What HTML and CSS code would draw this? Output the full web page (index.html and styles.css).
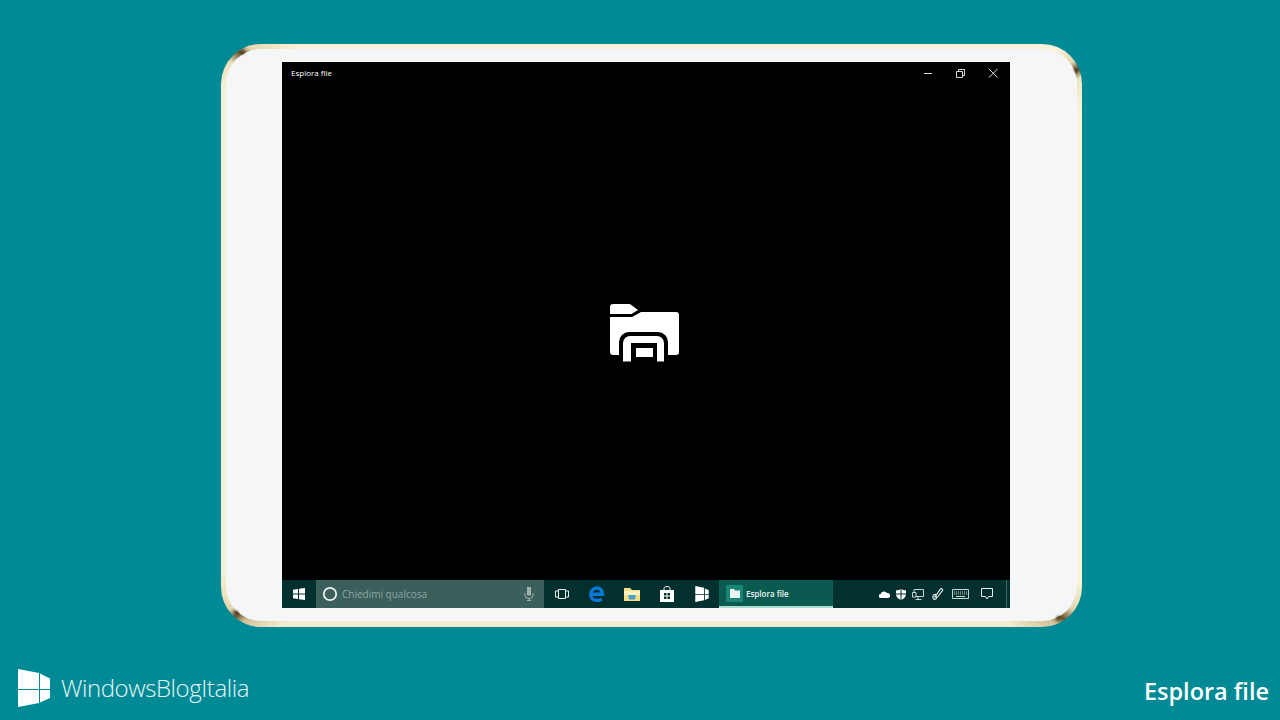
FILE: index.html
```html
<!DOCTYPE html>
<html lang="it">
<head>
<meta charset="utf-8">
<title>Esplora file</title>
<link rel="stylesheet" href="styles.css">
</head>
<body>
<main class="stage">
  <div class="tablet">
    <span class="spot spot-tl"></span><span class="spot spot-tr"></span><span class="spot spot-bl"></span><span class="spot spot-br"></span>
    <div class="face">
      <div class="screen">
        <header class="titlebar">
          <span class="title">Esplora file</span>
          <div class="controls">
            <svg class="ctl" viewBox="0 0 33 12"><path d="M13 6.500h8" stroke="#ddd" fill="none"/></svg>
            <svg class="ctl" viewBox="0 0 33 12"><path d="M12.500 4.500h6v6h-6zM14.500 4.500v-2h6v6h-2" stroke="#ddd" fill="none"/></svg>
            <svg class="ctl" viewBox="0 0 33 12"><path d="M12 2l8.500 8.500M20.500 2L12 10.500" stroke="#ddd" fill="none"/></svg>
          </div>
        </header>
        <div class="splash">
          <svg class="folder" viewBox="0 0 90 75">
            <path fill="#fff" d="M10 12a3 3 0 0 1 3-3h16a3 3 0 0 1 2 .8l7 5.200-6.500 4H10z"/>
            <path fill="#fff" d="M10 22h22l9-5h35a3 3 0 0 1 3 3v37a3 3 0 0 1-3 3H13a3 3 0 0 1-3-3z"/>
            <path fill="#000" d="M19 67V47a10 10 0 0 1 10-10h29a10 10 0 0 1 10 10v20z"/>
            <path fill="#fff" d="M23 66.500V48a7 7 0 0 1 7-7h27a7 7 0 0 1 7 7v18.500H57V48H31v18.500z"/>
            <path fill="#fff" d="M36 53h17v9H36z"/>
          </svg>
        </div>
        <nav class="taskbar">
          <div class="start">
            <svg class="i12" viewBox="0 0 12 12"><path fill="#fff" d="M0 1.700l5-.7v4.500H0zM6 .8l6-.8v5.500H6zM0 6.500h5V11l-5-.7zM6 6.500h6V12l-6-.8z"/></svg>
          </div>
          <div class="search">
            <svg class="cortana" viewBox="0 0 16 16"><circle cx="8" cy="8" r="6.200" fill="none" stroke="#e8efee" stroke-width="1.800"/></svg>
            <span class="query">Chiedimi qualcosa</span>
            <svg class="mic" viewBox="0 0 10 14"><path fill="#9fb2ae" d="M3 0h4v8.500H3z"/><path d="M1 6v2.500a4 3 0 0 0 8 0V6M5 11.500V14M3 13.500h4" fill="none" stroke="#9fb2ae"/></svg>
          </div>
          <div class="pins">
            <span class="pin"><svg class="i14" viewBox="0 0 14 12"><path fill="none" stroke="#e6eeec" d="M3.500 1.500h7v9h-7zM3.500 3H.5v6h3M10.500 3h3v6h-3"/></svg></span>
            <span class="pin"><svg class="i16" viewBox="0 0 16 16"><path fill="none" stroke="#0a78d7" stroke-width="3.400" d="M2 8.300h11.500C13.500 4.500 11 2 7.800 2 4.300 2 1.800 5 1.800 8.500c0 3.600 2.700 6 6 6 2 0 3.700-.5 5-1.500"/></svg></span>
            <span class="pin"><svg class="i16" viewBox="0 0 16 14"><path fill="#f6dd84" d="M0 1h6l2 2h8v11H0z"/><path fill="#fcf0bd" d="M0 4h16v4H0z"/><path fill="#4a9ccf" d="M4 8h8l-1 4.500H5z"/></svg></span>
            <span class="pin"><svg class="i16" viewBox="0 0 16 16"><path fill="none" stroke="#fff" d="M5 4.500V2.500C5 1.300 6.300.5 8 .5s3 .8 3 2v2"/><path fill="#fff" fill-rule="evenodd" d="M1 4h14v12H1zM5 7v2.500h2.500V7zM8.500 7v2.500H11V7zM5 10.500V13h2.500v-2.500zM8.500 10.500V13H11v-2.500z"/></svg></span>
            <span class="pin"><svg class="i16" viewBox="0 0 32 38"><path fill="#fff" d="M0 0l21 4v15H0zM23 6l9 4v9h-9zM0 21h21v13L0 38zM23 21h9v8l-9 4z"/></svg></span>
          </div>
          <div class="active">
            <span class="tile"><svg class="i10" viewBox="0 0 10 9"><path fill="#e8f4f1" d="M0 0h4l1 1.500h5V9H0z"/></svg></span>
            <span class="active-label">Esplora file</span>
          </div>
          <div class="tray">
            <svg class="t-cloud" viewBox="0 0 11 8"><path fill="#fff" d="M2 8a2 2 0 0 1-.3-4A3.500 3.500 0 0 1 8 3a2.500 2.500 0 0 1 1 5z"/></svg>
            <svg class="t-shield" viewBox="0 0 10 11"><path fill="#fff" d="M5 0c1.500 1 3 1.300 5 1.300V5c0 3-2 5-5 6-3-1-5-3-5-6V1.300C2 1.300 3.500 1 5 0z"/><path stroke="#02302f" d="M5 0v11M0 5h10"/></svg>
            <svg class="t-net" viewBox="0 0 12 11"><path fill="none" stroke="#dfe9e7" stroke-width=".9" d="M2 3V.5h9.500v7H4M.5 3.500h3.500v4.500H.5zM6 8v2.500M3.500 10.500h6"/></svg>
            <svg class="t-pen" viewBox="0 0 12 12"><path fill="none" stroke="#dfe9e7" stroke-width="1.200" d="M4 6.500C2 6 .5 8 1 10s3 1.500 3.500 0S3.500 8 2.500 9.500L8.500 1c1-.8 2.500.3 2 1.500L6 8.500c-.8 1-2 .5-1.500-.5"/></svg>
            <svg class="t-key" viewBox="0 0 17 10"><path fill="none" stroke="#c9d8d5" d="M.5.500h16v9H.5z"/><path stroke="#c9d8d5" stroke-dasharray="1 1" d="M2 3h13M2 5h13"/><path stroke="#c9d8d5" d="M4 7.500h9"/></svg>
            <svg class="t-note" viewBox="0 0 12 12"><path fill="none" stroke="#e6eeec" d="M.5.500h11v8H7.500L6 11 4.500 8.500H.5z"/></svg>
            <span class="edge"></span>
          </div>
        </nav>
      </div>
    </div>
  </div>
</main>
<footer class="footer">
  <div class="brand">
    <svg class="logo" viewBox="0 0 32 38"><path fill="#fff" d="M0 0l21 4v16H0zM22 4.500l10 5V20H22zM0 21h21v13L0 38zM22 21h10v8l-10 4.500z"/></svg>
    <span class="brand-name">WindowsBlogItalia</span>
  </div>
  <span class="page-title">Esplora file</span>
</footer>
</body>
</html>
```
FILE: styles.css
```css
* { box-sizing: border-box; }
html, body { margin: 0; height: 720px; overflow: hidden; }
body {
  background: #008a96;
  font-family: "Open Sans", "Noto Sans", sans-serif;
  color: #fff;
}
svg { display: block; }

.stage { padding: 44px 198px 0 221px; height: 662px; }

.tablet {
  position: relative;
  width: 861px;
  height: 583px;
  padding: 5px 5px 6px;
  border-radius: 40px;
  background: conic-gradient(
    from 0deg,
    #f9f2d6 0deg,
    #f9f2d6 55deg,
    #e4d6ae 57deg,
    #6a5330 58deg,
    #f0e6c4 59deg,
    #f9f2d6 62deg,
    #f9f2d6 120deg,
    #e4d6ae 123deg,
    #6a5330 124.500deg,
    #d2c198 125.500deg,
    #f4ecce 129deg,
    #f4ecce 232deg,
    #d2c198 235deg,
    #6a5330 236deg,
    #e4d6ae 237deg,
    #f7f0d4 241deg,
    #f7f0d4 300deg,
    #eadfba 303deg,
    #6a5330 304.500deg,
    #e4d6ae 305.500deg,
    #f9f2d6 309deg,
    #f9f2d6 360deg
  );
}
.face {
  height: 100%;
  padding: 13px 67px 13px 56px;
  background: #f4f6f8;
  border-radius: 35px;
}
.spot {
  position: absolute;
  width: 5px;
  height: 4px;
  background: #4d3a22;
  border-radius: 50%;
  filter: blur(.8px);
}
.spot-tl { left: 19px; top: 6px; transform: rotate(-40deg); }
.spot-tr { right: 3px; top: 24px; transform: rotate(60deg); }
.spot-bl { left: 13px; bottom: 12px; transform: rotate(40deg); }
.spot-br { right: 21px; bottom: 7px; transform: rotate(-30deg); }

.screen {
  display: flex;
  flex-direction: column;
  width: 728px;
  height: 546px;
  background: #000;
}
.titlebar {
  display: flex;
  justify-content: space-between;
  align-items: center;
  height: 22px;
  padding: 0 0 0 9px;
}
.title { font-size: 8px; line-height: 22px; font-weight: 400; color: #fff; }
.controls { display: flex; width: 99px; }
.ctl { width: 33px; height: 12px; }

.splash { flex: 1; position: relative; }
.folder { position: absolute; left: 318px; top: 211px; width: 90px; height: 75px; }

.taskbar {
  display: flex;
  height: 28px;
  background: #02302f;
}
.start { width: 34px; display: flex; align-items: center; justify-content: center; }
.i12 { width: 12px; height: 12px; }
.search {
  display: flex;
  align-items: center;
  width: 228px;
  padding-left: 6px;
  background: #3b5f5b;
}
.cortana { width: 16px; height: 16px; }
.query { margin-left: 4px; font-size: 10px; color: #8ea6a2; flex: 1; }
.mic { width: 10px; height: 14px; margin-right: 10px; }
.pins { display: flex; width: 175px; }
.pin { width: 35px; display: flex; align-items: center; justify-content: center; }
.i16 { width: 16px; height: 16px; }
.i14 { width: 14px; height: 12px; }
.active {
  display: flex;
  align-items: center;
  width: 114px;
  padding-left: 7px;
  background: #0a5a50;
  border-bottom: 2px solid #a8dcd2;
}
.tile {
  display: flex;
  align-items: center;
  justify-content: center;
  width: 17px;
  height: 17px;
  background: #1a8574;
}
.i10 { width: 10px; height: 9px; }
.active-label { margin-left: 3px; font-size: 8px; font-weight: 600; color: #eef5f3; }

.tray { flex: 1; display: flex; align-items: center; padding-left: 46px; }
.t-cloud { width: 11px; height: 8px; }
.t-shield { width: 10px; height: 11px; margin-left: 6px; }
.t-net { width: 12px; height: 11px; margin-left: 6px; }
.t-pen { width: 12px; height: 12px; margin-left: 8px; }
.t-key { width: 17px; height: 10px; margin-left: 8px; }
.t-note { width: 12px; height: 12px; margin-left: 12px; }
.edge { width: 1px; height: 28px; margin-left: 13px; background: #4b6664; }

.footer {
  display: flex;
  justify-content: space-between;
  align-items: flex-start;
  padding: 7px 11px 0 18px;
}
.brand { display: flex; align-items: flex-start; }
.logo { width: 32px; height: 38px; }
.brand-name {
  margin-left: 11px;
  font-size: 24px;
  line-height: 38px;
  font-weight: 300;
  letter-spacing: -.43px;
  color: #e6f5f5;
}
.page-title { margin-top: 5px; font-size: 23.500px; line-height: 34px; font-weight: 600; color: #fff; }
```
